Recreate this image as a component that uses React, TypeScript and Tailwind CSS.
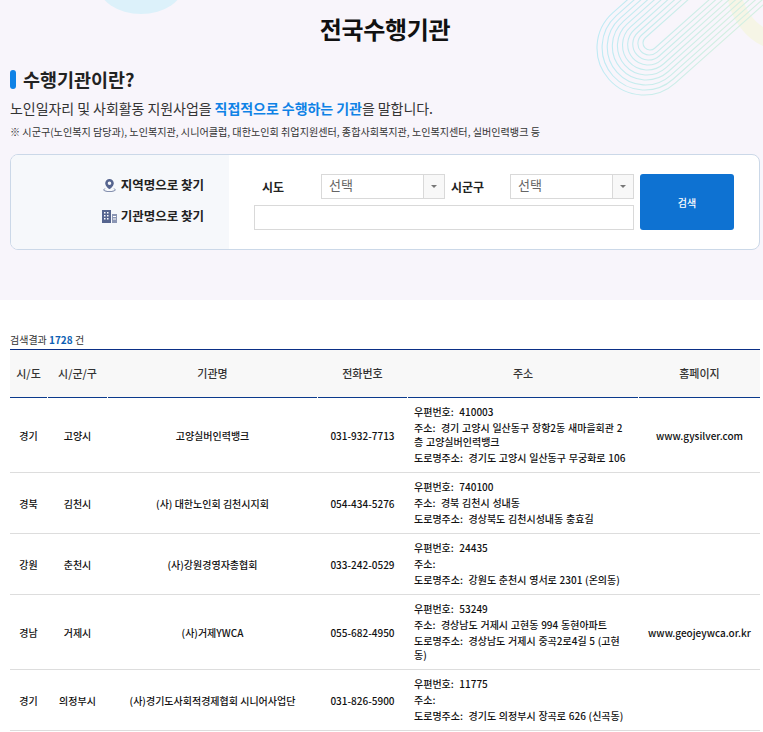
const rows = [
  {
    sido: "경기",
    sigungu: "고양시",
    name: "고양실버인력뱅크",
    tel: "031-932-7713",
    zip: "410003",
    addr: "경기 고양시 일산동구 장항2동 새마을회관 2층 고양실버인력뱅크",
    road: "경기도 고양시 일산동구 무궁화로 106",
    home: "www.gysilver.com",
    h: "h-[75px]",
  },
  {
    sido: "경북",
    sigungu: "김천시",
    name: "(사) 대한노인회 김천시지회",
    tel: "054-434-5276",
    zip: "740100",
    addr: "경북 김천시 성내동",
    road: "경상북도 김천시성내동 충효길",
    home: "",
    h: "h-[61px]",
  },
  {
    sido: "강원",
    sigungu: "춘천시",
    name: "(사)강원경영자총협회",
    tel: "033-242-0529",
    zip: "24435",
    addr: "",
    road: "강원도 춘천시 영서로 2301 (온의동)",
    home: "",
    h: "h-[61px]",
  },
  {
    sido: "경남",
    sigungu: "거제시",
    name: "(사)거제YWCA",
    tel: "055-682-4950",
    zip: "53249",
    addr: "경상남도 거제시 고현동 994 동현아파트",
    road: "경상남도 거제시 중곡2로4길 5 (고현동)",
    home: "www.geojeywca.or.kr",
    h: "h-[75px]",
  },
  {
    sido: "경기",
    sigungu: "의정부시",
    name: "(사)경기도사회적경제협회 시니어사업단",
    tel: "031-826-5900",
    zip: "11775",
    addr: "",
    road: "경기도 의정부시 장곡로 626 (신곡동)",
    home: "",
    h: "h-[61px]",
  },
];

const headers = [
  { label: "시/도", w: "w-[37px]" },
  { label: "시/군/구", w: "w-[59px]" },
  { label: "기관명", w: "w-[209px]" },
  { label: "전화번호", w: "w-[89px]" },
  { label: "주소", w: "w-[230px]" },
  { label: "홈페이지", w: "flex-1" },
];

// ten nested arcs, the centre drifts a little as the radius grows
const arcs = [0, 1, 2, 3, 4, 5, 6, 7, 8, 9];

function Decoration() {
  return (
    <svg className="absolute left-0 top-0" width="763" height="130" viewBox="0 0 763 130" fill="none">
      <defs>
        <linearGradient id="arcs" gradientUnits="userSpaceOnUse" x1="600" y1="40" x2="720" y2="60">
          <stop offset="0" stopColor="#bfeaf4" />
          <stop offset="1" stopColor="#d3efe2" />
        </linearGradient>
      </defs>
      <ellipse cx="141" cy="-16" rx="43" ry="30" fill="#dcf1fa" />
      <path d="M728 0 C731 18 745 38 763 46 L763 27 C754 21 747 12 743 0 Z" fill="#f6f5e6" />
      {arcs.map((i) => {
        const r = 7 + (i * 40) / 9;
        const cx = 650 - (i * 6) / 9;
        const cy = 43 + (i * 5) / 9;
        const x1 = cx - r * 0.665;
        const y1 = cy - r * 0.747;
        const x2 = cx + r * 0.665;
        const y2 = cy + r * 0.747;
        return (
          <path
            key={i}
            d={`M${x1 + 100} ${y1 - 89} L${x1} ${y1} A${r} ${r} 0 0 0 ${x2} ${y2} L${x2 + 130} ${y2 - 115.7}`}
            stroke="url(#arcs)"
            strokeWidth="1.1"
          />
        );
      })}
    </svg>
  );
}

export default function App() {
  return (
    <div className="w-[763px] h-[732px] overflow-hidden bg-white text-[#222] font-['Noto_Sans_CJK_KR','Noto_Sans',sans-serif]">
      {/* top area */}
      <section className="relative h-[300px] bg-[#f8f5fb] pl-[10px] pr-[3px]">
        <Decoration />
        <div className="relative">
          <h1 className="pt-[9px] text-center text-[24px] leading-[40px] font-bold tracking-[-0.3px] text-[#111]">전국수행기관</h1>

          <div className="mt-[18px] flex items-center gap-[7px]">
            <span className="h-[19px] w-[6px] rounded-full bg-[#0f82e6]" />
            <h2 className="text-[18.5px] leading-[24px] font-bold text-[#222]">수행기관이란?</h2>
          </div>

          <p className="mt-[5px] text-[14px] leading-[24px] tracking-[-0.06px] text-[#333]">
            노인일자리 및 사회활동 지원사업을{" "}
            <b className="font-bold text-[#0f82e6]">직접적으로 수행하는 기관</b>을 말합니다.
          </p>
          <p className="mt-[3px] text-[10.1px] leading-[18px] text-[#333]">
            ※ 시군구(노인복지 담당과), 노인복지관, 시니어클럽, 대한노인회 취업지원센터, 종합사회복지관, 노인복지센터, 실버인력뱅크 등
          </p>

          {/* search box */}
          <div className="mt-[13px] flex h-[96px] overflow-hidden rounded-[8px] border border-[#cbd8e8] bg-white">
            <div className="flex w-[218px] flex-col items-end gap-[11px] bg-[#f6f8fb] pr-[25px] pt-[20px] text-[12.5px] leading-[20px] font-bold text-[#222]">
              <div className="flex items-center gap-[4px]">
                <svg width="15" height="15" viewBox="0 0 16 16" fill="#56658f">
                  <path d="M8 1a4.600 4.600 0 0 0-4.600 4.600C3.400 8.800 8 12 8 12s4.600-3.200 4.600-6.400A4.600 4.600 0 0 0 8 1zm0 6.500a1.900 1.900 0 1 1 0-3.800 1.900 1.900 0 0 1 0 3.800z" />
                  <path d="M3.300 10.800C1.900 11.300 1.400 12 1.400 12.500c0 1.300 3 2.500 6.600 2.500s6.600-1.200 6.600-2.500c0-.5-.5-1.200-1.900-1.700l-.4.700c.8.300 1.200.7 1.200 1 0 .5-2 1.400-5.500 1.400s-5.500-.9-5.500-1.400c0-.3.400-.7 1.200-1z" opacity=".7" />
                </svg>
                지역명으로 찾기
              </div>
              <div className="flex items-center gap-[4px]">
                <svg width="15" height="15" viewBox="0 0 15 15">
                  <rect x="0" y="1" width="9" height="13" fill="#56658f" />
                  <rect x="10" y="5" width="5" height="9" fill="#8b96b4" />
                  <path d="M2 3h1.500v1.500H2zM5 3h1.500v1.500H5zM2 6h1.500v1.500H2zM5 6h1.500v1.500H5zM2 9h1.500v1.500H2zM5 9h1.500v1.500H5z" fill="#fff" />
                  <path d="M11 7h3v1h-3zM11 9.500h3v1h-3z" fill="#fff" />
                </svg>
                기관명으로 찾기
              </div>
            </div>

            <div className="flex flex-1 gap-[6px] pl-[25px] pt-[19px]">
              <div className="flex w-[380px] flex-col gap-[6px]">
                <div className="flex h-[25px] items-center">
                  <span className="w-[67px] pl-[8px] text-[12px] font-bold text-[#222]">시도</span>
                  <Select className="w-[124px]" />
                  <span className="w-[65px] pl-[6px] text-[12px] font-bold text-[#222]">시군구</span>
                  <Select className="w-[124px]" />
                </div>
                <input className="h-[25px] w-[380px] border border-[#d9d9d9] bg-white outline-none" />
              </div>
              <button className="h-[56px] w-[94px] rounded-[3px] bg-[#0e72d2] text-[10px] font-medium text-white">검색</button>
            </div>
          </div>
        </div>
      </section>

      {/* results */}
      <section className="pl-[10px] pr-[3px] pt-[32px]">
        <p className="text-[10px] leading-[16px] text-[#333]">
          검색결과 <b className="font-bold text-[#0e5fb4]">1728</b> 건
        </p>
        <div className="mt-[1px] flex h-[49px] gap-[1px] border-t border-[#0b2f86] bg-[#f8f8f8]">
          {headers.map((h) => (
            <div
              key={h.label}
              className={`${h.w} flex items-center justify-center border-b border-[#0b3a8c] text-[11px] font-medium text-[#333]`}
            >
              {h.label}
            </div>
          ))}
        </div>
        {rows.map((r) => (
          <div key={r.tel} className={`${r.h} flex gap-[1px] border-b border-[#dddddd] text-[10px] font-medium text-[#111]`}>
            <div className="flex w-[37px] items-center justify-center">{r.sido}</div>
            <div className="flex w-[59px] items-center justify-center">{r.sigungu}</div>
            <div className="flex w-[209px] items-center justify-center">{r.name}</div>
            <div className="flex w-[89px] items-center justify-center">{r.tel}</div>
            <div className="flex w-[230px] flex-col justify-center gap-[2px] pl-[6px] pr-[10px] leading-[14px] [word-spacing:0.5px]">
              <p>우편번호:&nbsp; {r.zip}</p>
              <p>주소:&nbsp; {r.addr}</p>
              <p>도로명주소:&nbsp; {r.road}</p>
            </div>
            <div className="flex flex-1 items-center justify-center">{r.home}</div>
          </div>
        ))}
      </section>
    </div>
  );
}

function Select({ className }: { className: string }) {
  return (
    <div className={`${className} flex h-[25px] border border-[#d9d9d9] bg-white`}>
      <span className="flex-1 pl-[7px] text-[13px] leading-[20px] text-[#666]">선택</span>
      <span className="flex w-[21px] items-center justify-center border-l border-[#d9d9d9] bg-[#f8f8f8]">
        <span className="h-0 w-0 border-x-[3px] border-t-[3px] border-x-transparent border-t-[#777]" />
      </span>
    </div>
  );
}
